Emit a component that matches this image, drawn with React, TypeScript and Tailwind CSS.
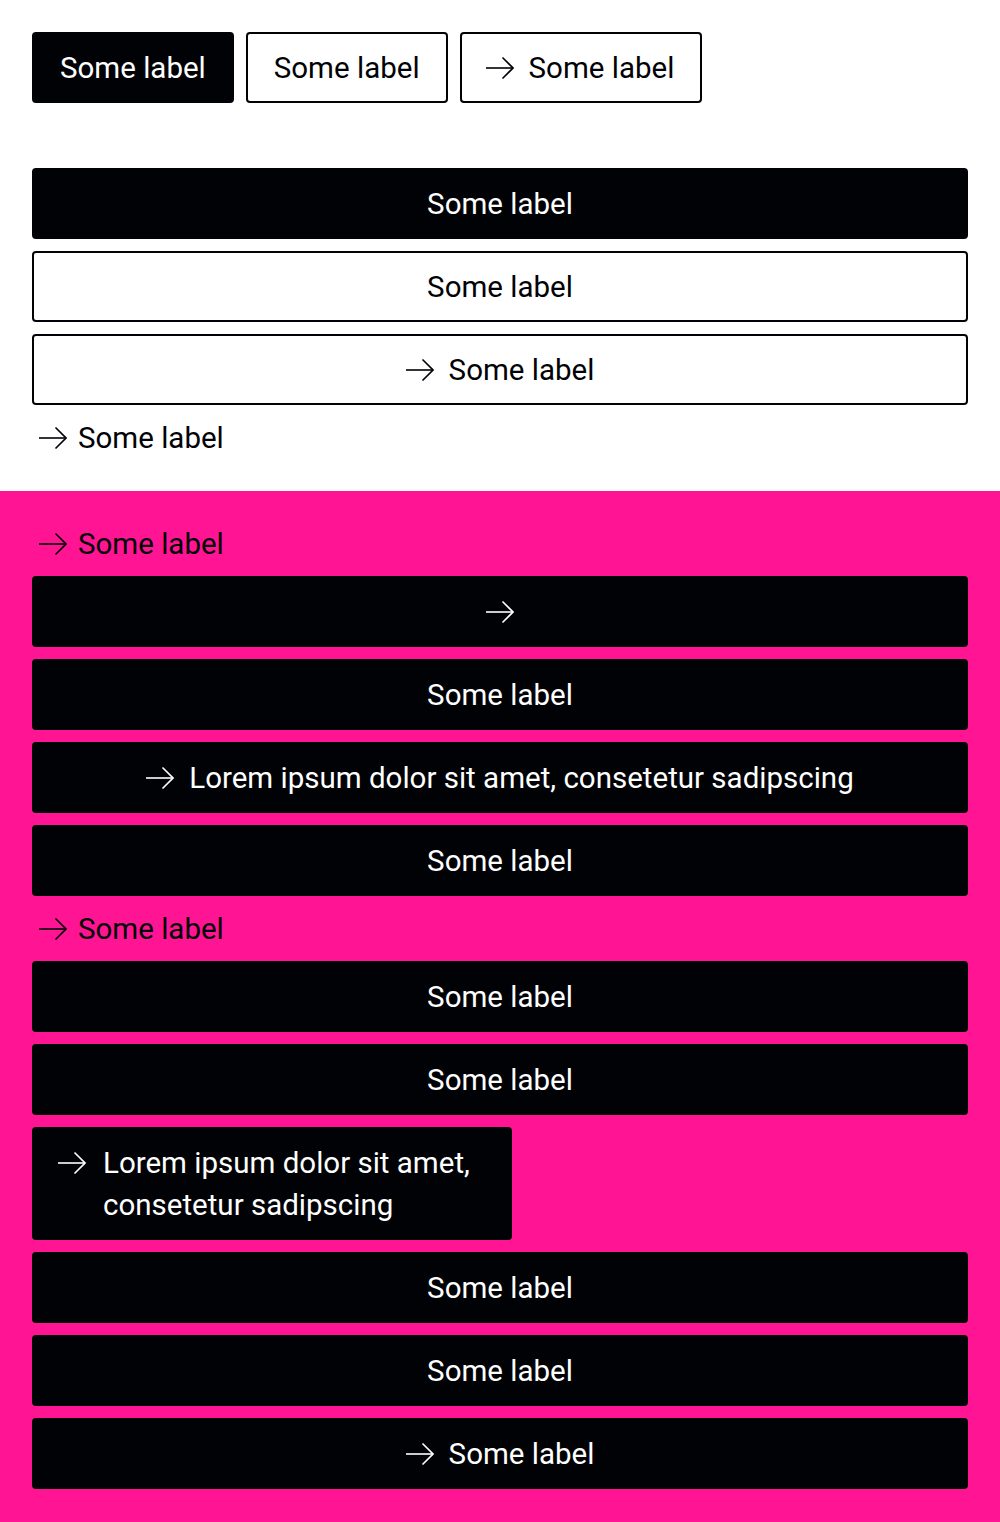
import React from "react";

const Arrow = ({ className = "" }: { className?: string }) => (
  <svg
    width="28"
    height="24"
    viewBox="0 0 28 24"
    fill="none"
    stroke="currentColor"
    strokeWidth="1.6"
    className={"shrink-0 " + className}
  >
    <path d="M0 12H27" />
    <path d="M16.5 1.5L27 12L16.5 22.5" />
  </svg>
);

const font = { fontFamily: "Roboto, 'Noto Sans', sans-serif" };

const baseBtn =
  "rounded-[4px] border-2 py-[12.5px] text-[29.5px] leading-[42px] h-[71px] flex items-center";

function Solid({ children, full = true, icon = false }: { children?: React.ReactNode; full?: boolean; icon?: boolean }) {
  return (
    <button
      className={
        baseBtn +
        " bg-[#010205] border-[#010205] text-white " +
        (full ? "w-full justify-center px-[26px]" : "px-[26px]")
      }
    >
      {icon && <Arrow className={children ? "mr-[15px]" : ""} />}
      {children}
    </button>
  );
}

function Outline({ children, full = true, icon = false }: { children?: React.ReactNode; full?: boolean; icon?: boolean }) {
  return (
    <button
      className={
        baseBtn +
        " bg-white border-[#010205] text-[#010205] " +
        (full ? "w-full justify-center px-[26px]" : icon ? "pl-[24px] pr-[26px]" : "px-[26px]")
      }
    >
      {icon && <Arrow className="mr-[15px]" />}
      {children}
    </button>
  );
}

function Link({ children }: { children: React.ReactNode }) {
  return (
    <a className="flex items-center h-[41px] text-[29.5px] leading-[42px] text-[#010205]">
      <Arrow className="ml-[7px] mr-[11px]" />
      {children}
    </a>
  );
}

export default function App() {
  return (
    <div style={font} className="w-[1000px] bg-white">
      <div className="px-8 pt-8 pb-[33px] flex flex-col">
        <div className="flex gap-3">
          <Solid full={false}>Some label</Solid>
          <Outline full={false}>Some label</Outline>
          <Outline full={false} icon>
            Some label
          </Outline>
        </div>
        <div className="mt-[65px] flex flex-col gap-3">
          <Solid>Some label</Solid>
          <Outline>Some label</Outline>
          <Outline icon>Some label</Outline>
          <Link>Some label</Link>
        </div>
      </div>
      <div className="bg-[#ff1493] px-8 pt-8 pb-[33px] flex flex-col gap-3">
        <Link>Some label</Link>
        <Solid icon />
        <Solid>Some label</Solid>
        <Solid icon>Lorem ipsum dolor sit amet, consetetur sadipscing</Solid>
        <Solid>Some label</Solid>
        <Link>Some label</Link>
        <Solid>Some label</Solid>
        <Solid>Some label</Solid>
        <button className="w-[480px] rounded-[4px] border-2 border-[#010205] bg-[#010205] text-white py-[12.5px] pl-[24px] pr-[26px] text-[29.5px] leading-[42px] flex items-start text-left">
          <span className="h-[42px] flex items-center shrink-0">
            <Arrow className="mr-[17px]" />
          </span>
          <span>Lorem ipsum dolor sit amet, consetetur sadipscing</span>
        </button>
        <Solid>Some label</Solid>
        <Solid>Some label</Solid>
        <Solid icon>Some label</Solid>
      </div>
    </div>
  );
}
